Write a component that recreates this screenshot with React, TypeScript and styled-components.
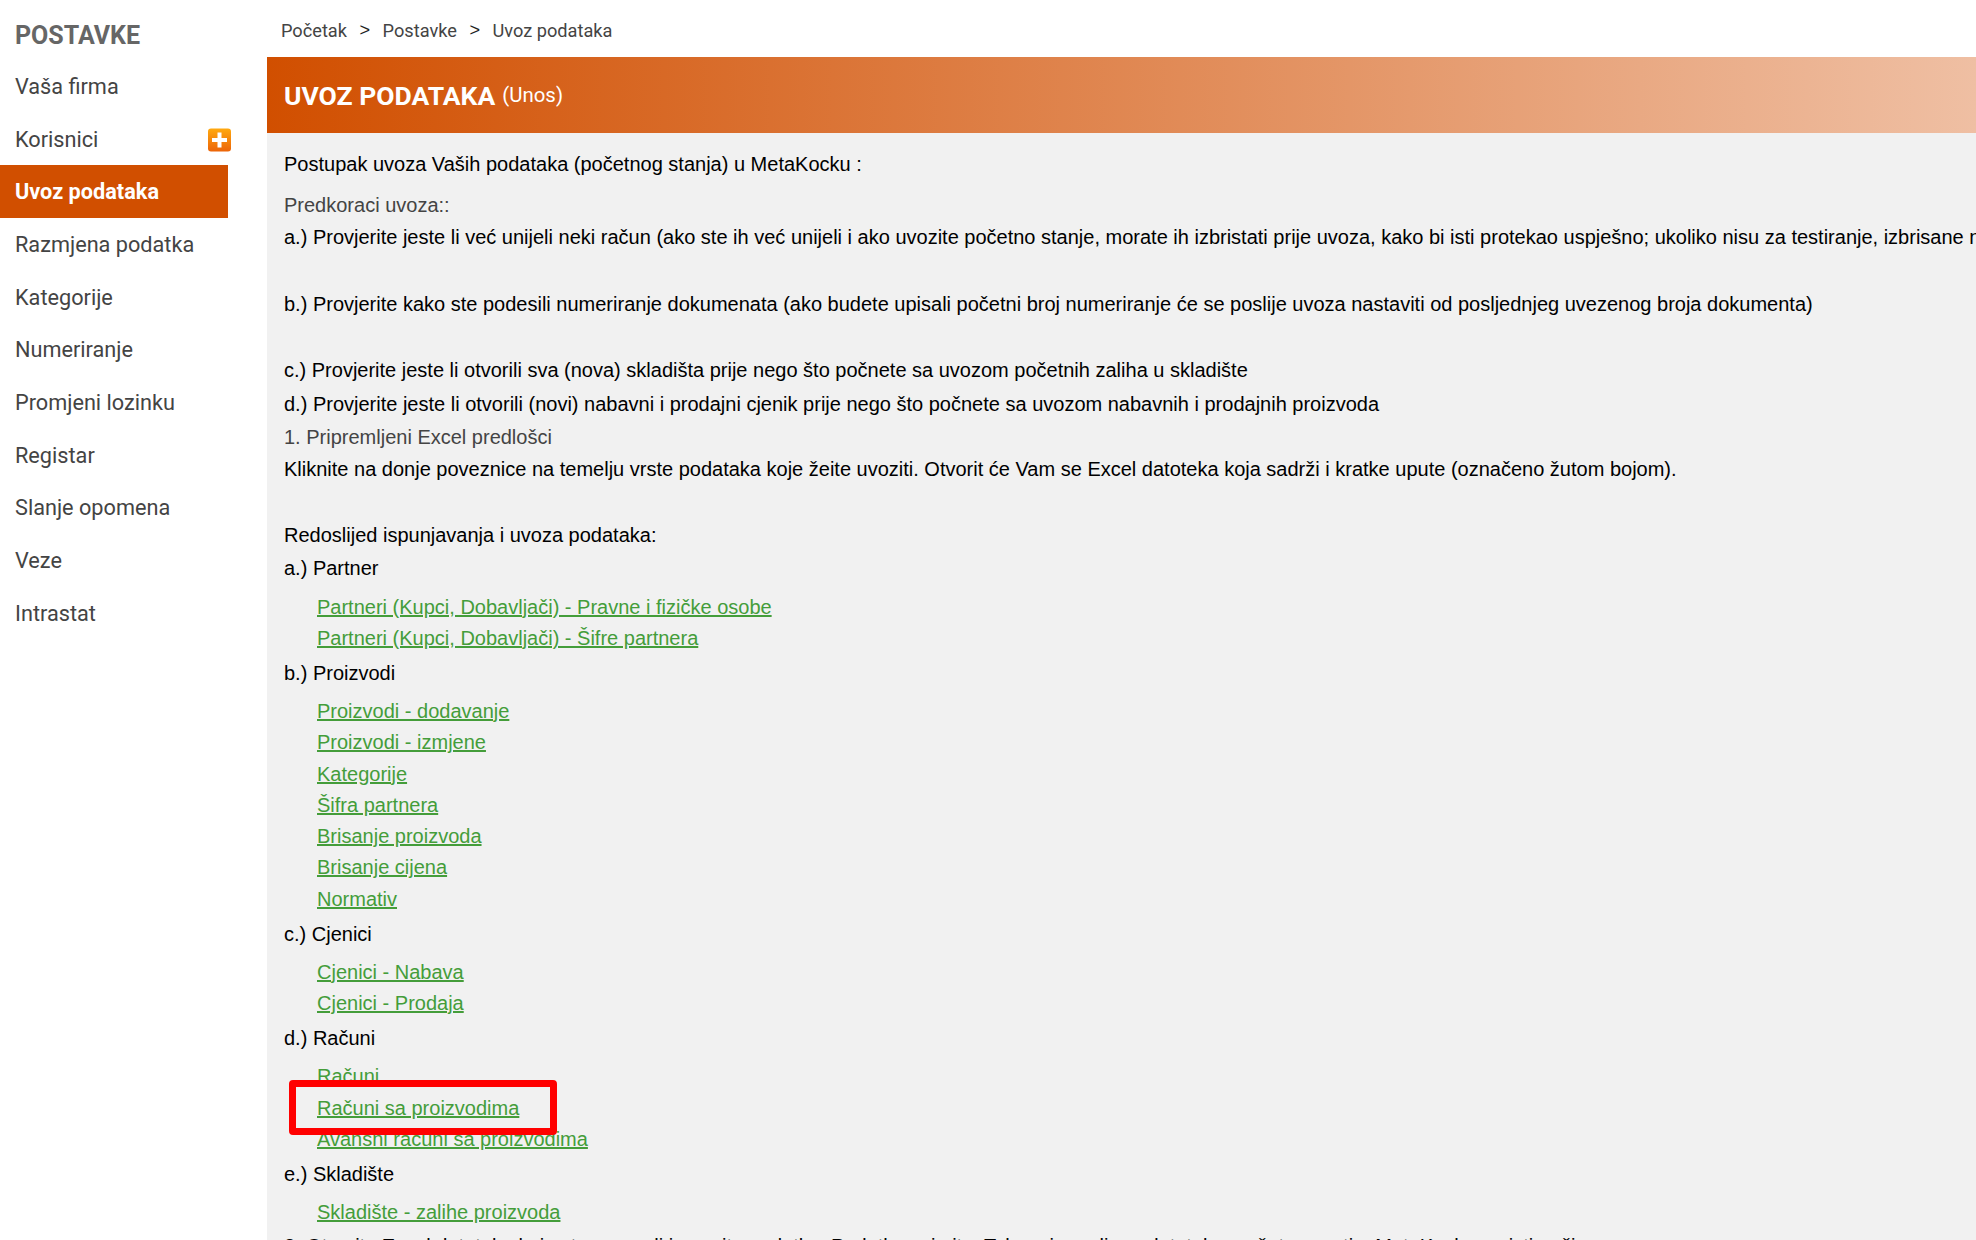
import * as React from 'react';
import styled, { createGlobalStyle } from 'styled-components';

const GlobalStyle = createGlobalStyle`
  html, body {
    margin: 0;
    padding: 0;
    height: 100%;
    overflow: hidden;
    background: #fff;
  }
  #root {
    height: 100%;
  }
`;

const Page = styled.div`
  display: flex;
  width: 1976px;
  height: 1240px;
  overflow: hidden;
  background: #fff;
  font-family: Roboto, sans-serif;
`;

const Sidebar = styled.aside`
  flex: 0 0 228px;
  margin-right: 39px;
  display: flex;
  flex-direction: column;
`;

const SidebarTitle = styled.h2`
  margin: 0;
  height: 60px;
  padding: 22px 0 0 15px;
  box-sizing: border-box;
  font-size: 25px;
  line-height: 28px;
  font-weight: 700;
  color: #666;
`;

const MenuItem = styled.a<{ $active?: boolean }>`
  position: relative;
  display: flex;
  align-items: center;
  flex: none;
  height: 52.7px;
  padding-left: 15px;
  font-size: 21.7px;
  font-weight: ${p => (p.$active ? 700 : 400)};
  color: ${p => (p.$active ? '#fff' : '#444')};
  background: ${p => (p.$active ? '#d14f00' : 'transparent')};
`;

const AddBadge = styled.svg`
  position: absolute;
  left: 206px;
  top: 14px;
  width: 26px;
  height: 26px;
`;

const Main = styled.main`
  flex: 1;
  min-width: 0;
  display: flex;
  flex-direction: column;
`;

const Breadcrumb = styled.nav`
  flex: none;
  height: 57px;
  display: flex;
  align-items: center;
  gap: 12.5px;
  padding: 4px 0 0 14px;
  box-sizing: border-box;
  font-size: 18.2px;
  color: #444;
`;

const Separator = styled.span`
  color: #222;
  font-family: "Liberation Sans", sans-serif;
`;

const Banner = styled.header`
  flex: none;
  height: 76px;
  display: flex;
  align-items: center;
  padding-left: 17px;
  background: linear-gradient(to right, #d14f00, #efbfa3);
  color: #fff;
`;

const BannerTitle = styled.h1`
  margin: 0;
  font-size: 26.5px;
  font-weight: 700;
`;

const BannerNote = styled.small`
  margin-left: 7px;
  font-size: 20.4px;
  font-weight: 400;
`;

const Content = styled.section`
  position: relative;
  flex: 1;
  min-height: 0;
  padding: 15px 0 0 17px;
  background: #f1f1f1;
  color: #000;
  font-family: "Liberation Sans", Arial, sans-serif;
  font-size: 20px;
  line-height: 33.3px;
  white-space: nowrap;
`;

const Intro = styled.div`
  margin-bottom: 8px;
`;

const Line = styled.div<{ $muted?: boolean; $gap?: boolean; $tight?: boolean }>`
  color: ${p => (p.$muted ? '#444' : '#000')};
  margin-bottom: ${p => (p.$gap ? '33.3px' : p.$muted ? '-1.4px' : p.$tight ? '-1.5px' : '0')};
`;

const GroupTitle = styled.div`
  margin-top: 1px;
`;

const LinkList = styled.ul`
  list-style: none;
  margin: 0;
  padding: 6px 0 1.5px 33px;
  line-height: 31.3px;
`;

const LinkItem = styled.li`
  a {
    color: #449d3a;
    text-decoration: underline;
  }
`;

const Highlight = styled.div`
  position: absolute;
  left: 22px;
  top: 947px;
  width: 268px;
  height: 55px;
  box-sizing: border-box;
  border: 7px solid #ff0000;
  border-radius: 4px;
`;

const menu = [
  'Vaša firma',
  'Korisnici',
  'Uvoz podataka',
  'Razmjena podatka',
  'Kategorije',
  'Numeriranje',
  'Promjeni lozinku',
  'Registar',
  'Slanje opomena',
  'Veze',
  'Intrastat',
];

const groups = [
  {
    title: 'a.) Partner',
    links: ['Partneri (Kupci, Dobavljači) - Pravne i fizičke osobe', 'Partneri (Kupci, Dobavljači) - Šifre partnera'],
  },
  {
    title: 'b.) Proizvodi',
    links: [
      'Proizvodi - dodavanje',
      'Proizvodi - izmjene',
      'Kategorije',
      'Šifra partnera',
      'Brisanje proizvoda',
      'Brisanje cijena',
      'Normativ',
    ],
  },
  { title: 'c.) Cjenici', links: ['Cjenici - Nabava', 'Cjenici - Prodaja'] },
  { title: 'd.) Računi', links: ['Računi', 'Računi sa proizvodima', 'Avansni računi sa proizvodima'] },
  { title: 'e.) Skladište', links: ['Skladište - zalihe proizvoda'] },
];

const App = () => (
  <Page>
    <GlobalStyle />
    <Sidebar>
      <SidebarTitle>POSTAVKE</SidebarTitle>
      {menu.map(item => (
        <MenuItem key={item} $active={item === 'Uvoz podataka'}>
          {item}
          {item === 'Korisnici' && (
            <AddBadge viewBox="0 0 26 26">
              <defs>
                <linearGradient id="badge" x1="0" y1="0" x2="0" y2="1">
                  <stop offset="0" stopColor="#ffa90f" />
                  <stop offset="1" stopColor="#ec6408" />
                </linearGradient>
              </defs>
              <rect x="2" y="1.500" width="23" height="23" rx="3" fill="url(#badge)" />
              <path d="M11.500 5.500h4v5.500H21v4h-5.500v5.500h-4V15H6v-4h5.500z" fill="#fff" />
            </AddBadge>
          )}
        </MenuItem>
      ))}
    </Sidebar>
    <Main>
      <Breadcrumb>
        <span>Početak</span>
        <Separator>&gt;</Separator>
        <span>Postavke</span>
        <Separator>&gt;</Separator>
        <span>Uvoz podataka</span>
      </Breadcrumb>
      <Banner>
        <BannerTitle>UVOZ PODATAKA</BannerTitle>
        <BannerNote>(Unos)</BannerNote>
      </Banner>
      <Content>
        <Intro>Postupak uvoza Vaših podataka (početnog stanja) u MetaKocku :</Intro>
        <Line $muted>Predkoraci uvoza::</Line>
        <Line $gap>
          a.) Provjerite jeste li već unijeli neki račun (ako ste ih već unijeli i ako uvozite početno stanje, morate ih izbristati prije uvoza, kako bi isti protekao uspješno; ukoliko nisu za testiranje, izbrisane ne morate)
        </Line>
        <Line $gap>
          b.) Provjerite kako ste podesili numeriranje dokumenata (ako budete upisali početni broj numeriranje će se poslije uvoza nastaviti od posljednjeg uvezenog broja dokumenta)
        </Line>
        <Line>c.) Provjerite jeste li otvorili sva (nova) skladišta prije nego što počnete sa uvozom početnih zaliha u skladište</Line>
        <Line>d.) Provjerite jeste li otvorili (novi) nabavni i prodajni cjenik prije nego što počnete sa uvozom nabavnih i prodajnih proizvoda</Line>
        <Line $muted>1. Pripremljeni Excel predlošci</Line>
        <Line $gap>
          Kliknite na donje poveznice na temelju vrste podataka koje žeite uvoziti. Otvorit će Vam se Excel datoteka koja sadrži i kratke upute (označeno žutom bojom).
        </Line>
        <Line $tight>Redoslijed ispunjavanja i uvoza podataka:</Line>
        {groups.map(group => (
          <React.Fragment key={group.title}>
            <GroupTitle>{group.title}</GroupTitle>
            <LinkList>
              {group.links.map(link => (
                <LinkItem key={link}>
                  <a href="#">{link}</a>
                </LinkItem>
              ))}
            </LinkList>
          </React.Fragment>
        ))}
        <Line>2. Otvorite Excel datoteku koju ste preuzeli i unesite podatke. Podatke snimite. Tako pripremljenu datoteku možete uvesti u MetaKocku na isti način.</Line>
        <Highlight />
      </Content>
    </Main>
  </Page>
);

export default App;
